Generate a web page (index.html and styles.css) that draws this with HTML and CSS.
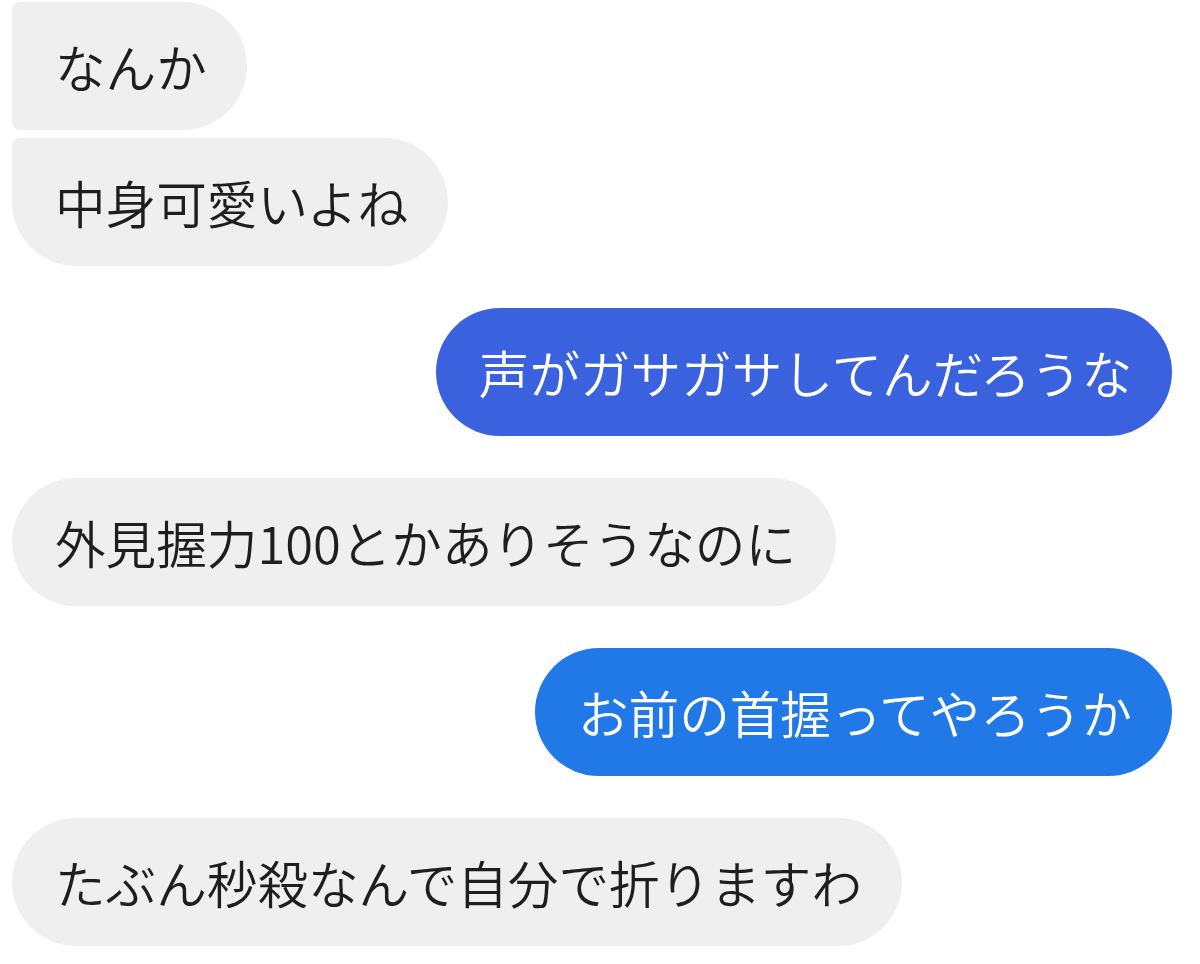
FILE: index.html
```html
<!DOCTYPE html>
<html lang="ja">
<head>
<meta charset="utf-8">
<link rel="stylesheet" href="styles.css">
</head>
<body>
<div class="chat">
  <div class="group">
    <div class="bubble in first">なんか</div>
    <div class="bubble in last">中身可愛いよね</div>
  </div>
  <div class="bubble out out-a">声がガサガサしてんだろうな</div>
  <div class="bubble in">外見握力100とかありそうなのに</div>
  <div class="bubble out out-b">お前の首握ってやろうか</div>
  <div class="bubble in">たぶん秒殺なんで自分で折りますわ</div>
</div>
</body>
</html>
```
FILE: styles.css
```css
html, body {
  margin: 0;
  padding: 0;
  background: #ffffff;
}
body {
  width: 1200px;
  height: 964px;
  overflow: hidden;
  font-family: "Noto Sans CJK JP", "Noto Sans", sans-serif;
}
.chat {
  display: flex;
  flex-direction: column;
  gap: 42px;
  padding: 2px 28px 0 12px;
}
.group {
  display: flex;
  flex-direction: column;
  gap: 8px;
}
.bubble {
  box-sizing: border-box;
  height: 128px;
  display: flex;
  align-items: center;
  padding: 0 40px 0 43px;
  font-size: 50.6px;
  font-weight: 350;
  line-height: 1;
  border-radius: 64px;
  white-space: nowrap;
  width: max-content;
}
.in {
  align-self: flex-start;
  background: #efefef;
  color: #1e1e1e;
}
.in.first {
  border-radius: 8px 64px 64px 8px;
}
.in.last {
  border-radius: 8px 64px 64px 64px;
}
.out {
  align-self: flex-end;
  color: #ffffff;
}
.out-a {
  background: #3a62de;
}
.out-b {
  background: #2079e7;
}
```
